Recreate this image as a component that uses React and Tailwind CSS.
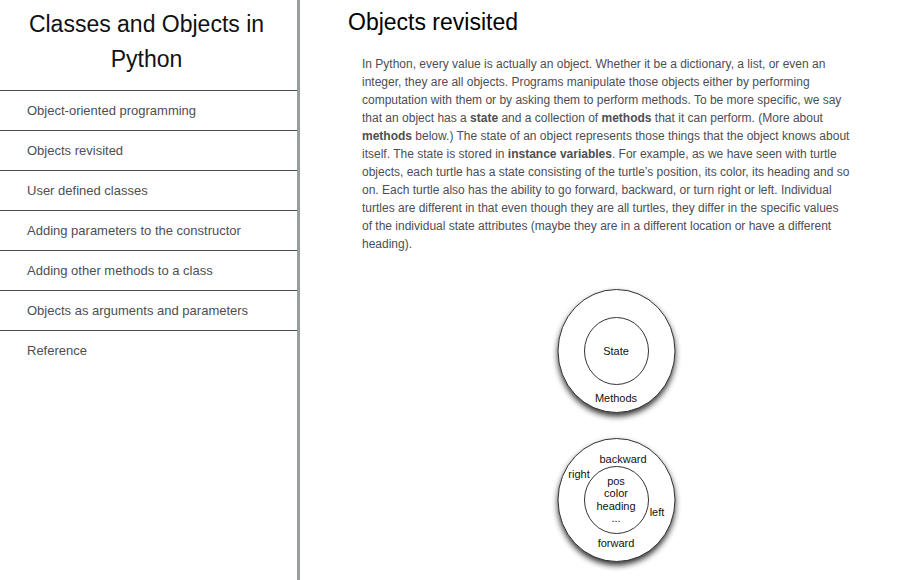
const sections = [
  { id: "oop", label: "Object-oriented programming" },
  { id: "objects-revisited", label: "Objects revisited" },
  { id: "user-defined", label: "User defined classes" },
  { id: "constructor", label: "Adding parameters to the constructor" },
  { id: "methods", label: "Adding other methods to a class" },
  { id: "arguments", label: "Objects as arguments and parameters" },
  { id: "reference", label: "Reference" },
];

function Sidebar() {
  return (
    <nav className="w-[300px] shrink-0 border-r-[3px] border-[#97a09f]">
      <h1 className="pt-[7px] pr-4 pb-[13px] pl-3 text-center text-[23px] leading-[35px] text-[#111]">
        Classes and Objects in Python
      </h1>
      <ul>
        {sections.map((section) => (
          <li key={section.id} className="border-t border-[#4b494f]">
            <a
              href={`#${section.id}`}
              className="block py-[9px] pl-[27px] text-[13px] leading-[21px] text-[#4d4e53]"
            >
              {section.label}
            </a>
          </li>
        ))}
      </ul>
    </nav>
  );
}

const conceptLabels = [
  { text: "State", x: 70, y: 75 },
  { text: "Methods", x: 70, y: 122 },
];

const turtleLabels = [
  { text: "backward", x: 77, y: 34 },
  { text: "right", x: 33, y: 49 },
  { text: "pos", x: 70, y: 56 },
  { text: "color", x: 70, y: 68 },
  { text: "heading", x: 70, y: 81 },
  { text: "...", x: 70, y: 93 },
  { text: "left", x: 111, y: 87 },
  { text: "forward", x: 70, y: 118 },
];

function ObjectDiagram({ id, title, labels }) {
  return (
    <svg width="141" height="149" viewBox="0 0 141 149" role="img" aria-label={title}>
      <defs>
        <filter id={id} x="-20%" y="-20%" width="140%" height="140%">
          <feGaussianBlur stdDeviation="3" />
        </filter>
      </defs>
      <ellipse cx="70.5" cy="74.5" rx="58.5" ry="61.5" fill="#000" opacity="0.85" filter={`url(#${id})`} />
      <ellipse cx="70.5" cy="71" rx="58.5" ry="61.5" fill="#fff" stroke="#333" />
      <ellipse cx="70.5" cy="71" rx="32" ry="33.5" fill="#fff" stroke="#333" />
      <g fontSize="11" textAnchor="middle" fill="#111">
        {labels.map((label) => (
          <text key={label.text} x={label.x} y={label.y}>
            {label.text}
          </text>
        ))}
      </g>
    </svg>
  );
}

export default function App() {
  return (
    <div className="flex min-h-screen bg-white font-['Liberation_Sans',Arial,sans-serif]">
      <Sidebar />
      <main id="objects-revisited" className="min-w-0 flex-1 pr-3 pl-12">
        <h2 className="pt-[6px] text-[23px] leading-[32px] text-black">Objects revisited</h2>
        <p className="mt-[17px] ml-[14px] max-w-[489px] text-[12px] leading-[18px] text-[#4d4e53]">
          In Python, every value is actually an object. Whether it be a dictionary, a list, or even
          an integer, they are all objects. Programs manipulate those objects either by performing
          computation with them or by asking them to perform methods. To be more specific, we say
          that an object has a <strong>state</strong> and a collection of <strong>methods</strong>{" "}
          that it can perform. (More about <strong>methods</strong> below.) The state of an object
          represents those things that the object knows about itself. The state is stored in{" "}
          <strong>instance variables</strong>. For example, as we have seen with turtle objects,
          each turtle has a state consisting of the turtle’s position, its color, its heading and so
          on. Each turtle also has the ability to go forward, backward, or turn right or left.
          Individual turtles are different in that even though they are all turtles, they differ in
          the specific values of the individual state attributes (maybe they are in a different
          location or have a different heading).
        </p>
        <figure className="mt-[27px] flex flex-col items-center">
          <ObjectDiagram id="concept-shadow" title="An object has state and methods" labels={conceptLabels} />
          <ObjectDiagram id="turtle-shadow" title="State and methods of a turtle object" labels={turtleLabels} />
        </figure>
      </main>
    </div>
  );
}
